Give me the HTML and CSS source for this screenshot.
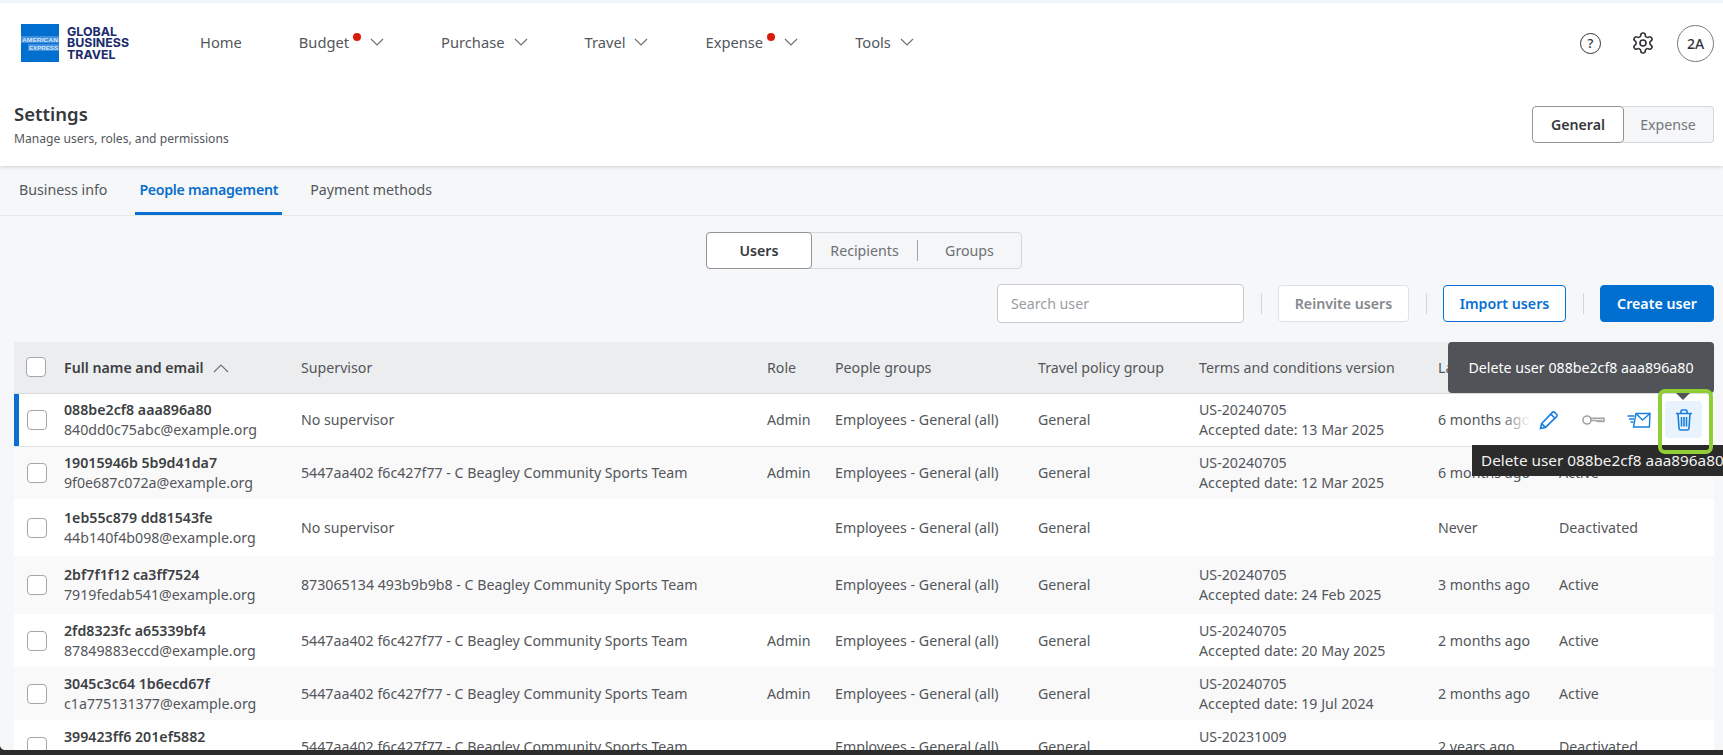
FILE: index.html
```html
<!DOCTYPE html>
<html lang="en">
<head>
<meta charset="utf-8">
<title>Settings</title>
<link rel="stylesheet" href="styles.css">
</head>
<body>
<header class="topbar">
  <div class="navrow">
    <svg class="logo" width="38" height="38" viewBox="0 0 38 38">
      <rect width="38" height="38" fill="#016fd0"/>
      <rect x="0" y="12" width="38" height="7" fill="#3f8fdc"/>
      <rect x="7" y="20" width="31" height="7" fill="#3f8fdc"/>
      <text x="1" y="18" class="logo-mark" textLength="36" lengthAdjust="spacingAndGlyphs">AMERICAN</text>
      <text x="8" y="26" class="logo-mark" textLength="29" lengthAdjust="spacingAndGlyphs">EXPRESS</text>
    </svg>
    <div class="logo-words">GLOBAL<br>BUSINESS<br>TRAVEL</div>
    <nav class="nav">
      <a class="nav-item">Home</a>
      <a class="nav-item">Budget<i class="dot"></i><svg class="chev" viewBox="0 0 14 8"><path d="M1 1l6 6 6-6"/></svg></a>
      <a class="nav-item">Purchase<svg class="chev" viewBox="0 0 14 8"><path d="M1 1l6 6 6-6"/></svg></a>
      <a class="nav-item">Travel<svg class="chev" viewBox="0 0 14 8"><path d="M1 1l6 6 6-6"/></svg></a>
      <a class="nav-item">Expense<i class="dot"></i><svg class="chev" viewBox="0 0 14 8"><path d="M1 1l6 6 6-6"/></svg></a>
      <a class="nav-item">Tools<svg class="chev" viewBox="0 0 14 8"><path d="M1 1l6 6 6-6"/></svg></a>
    </nav>
    <div class="top-tools">
      <span class="help">?</span>
      <svg class="gear" width="24" height="24" viewBox="0 0 24 24"><path d="M12.22 2h-.44a2 2 0 0 0-2 2v.18a2 2 0 0 1-1 1.73l-.43.25a2 2 0 0 1-2 0l-.15-.08a2 2 0 0 0-2.73.73l-.22.38a2 2 0 0 0 .73 2.73l.15.1a2 2 0 0 1 1 1.72v.51a2 2 0 0 1-1 1.74l-.15.09a2 2 0 0 0-.73 2.73l.22.38a2 2 0 0 0 2.73.73l.15-.08a2 2 0 0 1 2 0l.43.25a2 2 0 0 1 1 1.73V20a2 2 0 0 0 2 2h.44a2 2 0 0 0 2-2v-.18a2 2 0 0 1 1-1.73l.43-.25a2 2 0 0 1 2 0l.15.08a2 2 0 0 0 2.73-.73l.22-.39a2 2 0 0 0-.73-2.73l-.15-.08a2 2 0 0 1-1-1.74v-.5a2 2 0 0 1 1-1.74l.15-.09a2 2 0 0 0 .73-2.73l-.22-.38a2 2 0 0 0-2.73-.73l-.15.08a2 2 0 0 1-2 0l-.43-.25a2 2 0 0 1-1-1.73V4a2 2 0 0 0-2-2z"/><circle cx="12" cy="12" r="3"/></svg>
      <span class="avatar">2A</span>
    </div>
  </div>
  <div class="page-head">
    <div>
      <h1 class="title">Settings</h1>
      <p class="subtitle">Manage users, roles, and permissions</p>
    </div>
    <div class="head-seg">
      <span class="head-seg-on">General</span>
      <span class="head-seg-off">Expense</span>
    </div>
  </div>
</header>

<div class="tabs">
  <a class="tab">Business info</a>
  <a class="tab tab-on">People management</a>
  <a class="tab">Payment methods</a>
</div>

<main class="content">
  <div class="seg-wrap">
    <div class="seg">
      <span class="seg-on">Users</span>
      <span class="seg-item seg-recipients">Recipients</span>
      <span class="seg-item seg-groups">Groups</span>
    </div>
  </div>

  <div class="toolbar">
    <input class="search" placeholder="Search user">
    <i class="vsep"></i>
    <button class="btn btn-muted">Reinvite users</button>
    <i class="vsep"></i>
    <button class="btn btn-outline">Import users</button>
    <i class="vsep"></i>
    <button class="btn btn-primary">Create user</button>
  </div>

  <table class="users">
    <colgroup>
      <col class="c-check"><col class="c-name"><col class="c-sup"><col class="c-role"><col class="c-groups"><col class="c-policy"><col class="c-terms"><col class="c-last"><col class="c-status">
    </colgroup>
    <thead>
      <tr>
        <th class="chk-cell"><span class="cb cb-head"></span></th>
        <th class="th-name">Full name and email<svg class="sort" viewBox="0 0 16 9"><path d="M1 8l7-7 7 7"/></svg></th>
        <th>Supervisor</th><th>Role</th><th>People groups</th><th>Travel policy group</th><th>Terms and conditions version</th><th>Last login</th><th>Status</th>
      </tr>
    </thead>
    <tbody>
      <tr class="row-selected">
        <td class="chk-cell"><span class="cb"></span></td>
        <td><b>088be2cf8 aaa896a80</b><br>840dd0c75abc@example.org</td>
        <td>No supervisor</td><td>Admin</td><td>Employees - General (all)</td><td>General</td>
        <td>US-20240705<br>Accepted date: 13 Mar 2025</td>
        <td>6 months ago</td>
        <td class="actions-cell">
          <div class="actions">
            <span class="act-slot"><svg class="act" width="20" height="20" viewBox="0 0 20 20"><path d="M1.5 18.5l1.1-4.9L13.4 2.4a1.6 1.6 0 0 1 2.3 0l1.9 1.9a1.6 1.6 0 0 1 0 2.3L6.4 17.4z"/><path d="M2.6 13.6l3.8 3.8M11.8 4.1l3.9 3.9"/></svg></span>
            <span class="act-slot"><svg class="act act-key" width="23" height="12" viewBox="0 0 23 12"><circle cx="5" cy="6" r="4"/><path d="M9 4.3h13v3l-1.5.4-1.2-1.2-1.2 1.2-1.2-1.2-1.2 1.2-1.2-1.2H9"/></svg></span>
            <span class="act-slot"><svg class="act act-mail" width="24" height="18" viewBox="0 0 24 18"><path d="M9 2.5h14l-.6 13.5H6.5z"/><path d="M9 2.5l6.5 6.5 7.5-6.5"/><path d="M0.5 5h7M2 8h5M3.5 11h3"/></svg></span>
            <span class="act-slot act-trash">
              <svg class="act" width="18" height="22" viewBox="0 0 18 22"><path d="M1 4.5h16M6 4.5V2.2C6 1.5 6.5 1 7.2 1h3.6c.7 0 1.2.5 1.2 1.2v2.3M3 4.5l1 14.8c.1.9.7 1.7 1.7 1.7h6.6c1 0 1.6-.8 1.7-1.7l1-14.8M6.5 8v9.5M9 8v9.5M11.5 8v9.5"/></svg>
            </span>
          </div>
        </td>
      </tr>
      <tr class="row-alt">
        <td class="chk-cell"><span class="cb"></span></td>
        <td><b>19015946b 5b9d41da7</b><br>9f0e687c072a@example.org</td>
        <td>5447aa402 f6c427f77 - C Beagley Community Sports Team</td><td>Admin</td><td>Employees - General (all)</td><td>General</td>
        <td>US-20240705<br>Accepted date: 12 Mar 2025</td>
        <td>6 months ago</td><td>Active</td>
      </tr>
      <tr class="row-tall">
        <td class="chk-cell"><span class="cb"></span></td>
        <td><b>1eb55c879 dd81543fe</b><br>44b140f4b098@example.org</td>
        <td>No supervisor</td><td></td><td>Employees - General (all)</td><td>General</td>
        <td></td>
        <td>Never</td><td>Deactivated</td>
      </tr>
      <tr class="row-taller row-alt">
        <td class="chk-cell"><span class="cb"></span></td>
        <td><b>2bf7f1f12 ca3ff7524</b><br>7919fedab541@example.org</td>
        <td>873065134 493b9b9b8 - C Beagley Community Sports Team</td><td></td><td>Employees - General (all)</td><td>General</td>
        <td>US-20240705<br>Accepted date: 24 Feb 2025</td>
        <td>3 months ago</td><td>Active</td>
      </tr>
      <tr>
        <td class="chk-cell"><span class="cb"></span></td>
        <td><b>2fd8323fc a65339bf4</b><br>87849883eccd@example.org</td>
        <td>5447aa402 f6c427f77 - C Beagley Community Sports Team</td><td>Admin</td><td>Employees - General (all)</td><td>General</td>
        <td>US-20240705<br>Accepted date: 20 May 2025</td>
        <td>2 months ago</td><td>Active</td>
      </tr>
      <tr class="row-alt">
        <td class="chk-cell"><span class="cb"></span></td>
        <td><b>3045c3c64 1b6ecd67f</b><br>c1a775131377@example.org</td>
        <td>5447aa402 f6c427f77 - C Beagley Community Sports Team</td><td>Admin</td><td>Employees - General (all)</td><td>General</td>
        <td>US-20240705<br>Accepted date: 19 Jul 2024</td>
        <td>2 months ago</td><td>Active</td>
      </tr>
      <tr>
        <td class="chk-cell"><span class="cb"></span></td>
        <td><b>399423ff6 201ef5882</b><br>&nbsp;</td>
        <td>5447aa402 f6c427f77 - C Beagley Community Sports Team</td><td></td><td>Employees - General (all)</td><td>General</td>
        <td>US-20231009<br>&nbsp;</td>
        <td>2 years ago</td><td>Deactivated</td>
      </tr>
    </tbody>
  </table>
</main>

<div class="tip-styled">Delete user 088be2cf8 aaa896a80</div>
<div class="tip-native">Delete user 088be2cf8 aaa896a80</div>
<div class="highlight"></div>
<div class="screen-edge"></div>
</body>
</html>
```

FILE: styles.css
```css
* { box-sizing: border-box; }
html, body { margin: 0; height: 755px; overflow: hidden; }
body {
  position: relative;
  background: #f6f7f9;
  color: #53565a;
  font-family: "Noto Sans", sans-serif;
  font-size: 14.2px;
  border-top: 3px solid #eef6fd;
}

.topbar { background: #fff; height: 163px; box-shadow: 0 1px 4px rgba(0,0,0,.16); position: relative; }
.navrow { display: flex; align-items: center; height: 80px; padding: 0 9px 0 21px; }
.logo { flex: none; }
.logo-mark { font: 700 6px "Liberation Sans", sans-serif; fill: #d5e8f9; }
.logo-words {
  margin-left: 8px; width: 133px;
  font: 700 12.4px/11.5px Inter, sans-serif; color: #1a2b6d;
}
.nav { display: flex; align-items: center; gap: 57px; padding-bottom: 3px; font-size: 14.7px; }
.nav-item { display: flex; align-items: center; color: #53565a; line-height: 20px; }
.dot { width: 8px; height: 8px; margin: -10px 0 0 4px; border-radius: 50%; background: #d81c0c; }
.chev { width: 14px; height: 8px; margin-left: 9px; fill: none; stroke: #6a6d72; stroke-width: 1.1; }

.top-tools { margin-left: auto; display: flex; align-items: center; }
.help {
  width: 21px; height: 21px; border: 1.5px solid #2f3236; border-radius: 50%;
  display: flex; align-items: center; justify-content: center;
  color: #2f3236; font-size: 13px; line-height: 1; font-weight: 500;
}
.gear { margin: 0 22px 0 30px; fill: none; stroke: #2f3236; stroke-width: 1.6; }
.avatar {
  width: 37px; height: 37px; border: 1px solid #777a7e; border-radius: 50%;
  display: flex; align-items: center; justify-content: center;
  color: #2f3236; font-weight: 500; font-size: 14px;
}

.page-head { display: flex; justify-content: space-between; padding: 0 9px 0 14px; }
.title { margin: 18px 0 0; font-size: 18.5px; line-height: 26px; font-weight: 600; color: #35383c; }
.subtitle { margin: 3px 0 0; font-size: 12.1px; line-height: 18px; color: #53565a; }
.head-seg { display: flex; height: 37px; margin-top: 23px; line-height: 35px; }
.head-seg-on {
  width: 92px; text-align: center; background: #fff; color: #35383c; font-weight: 600;
  border: 1px solid #909396; border-radius: 4px; z-index: 1;
}
.head-seg-off {
  width: 91px; margin-left: -1px; text-align: center; background: #f5f6f8; color: #74777b;
  border: 1px solid #d5d7da; border-left: 0; border-radius: 0 4px 4px 0;
}

.tabs { display: flex; gap: 24px; height: 50px; padding-left: 15px; border-bottom: 1px solid #e6e8eb; }
.tab { padding: 0 4px; line-height: 47px; height: 49px; color: #53565a; }
.tab-on { color: #0a6fcc; font-weight: 600; border-bottom: 3px solid #0a6fd0; letter-spacing: -0.3px; }

.content { padding: 0 9px 0 14px; }
.seg-wrap { display: flex; justify-content: center; padding-top: 16px; }
.seg {
  display: flex; width: 316px; height: 37px; line-height: 35px; text-align: center;
  background: #f5f6f8; border: 1px solid #d5d7da; border-radius: 4px; color: #6d7074;
}
.seg-on {
  width: 106px; margin: -1px 0 0 -1px; height: 37px; background: #fff; color: #35383c; font-weight: 600;
  border: 1px solid #909396; border-radius: 4px;
}
.seg-item { display: block; }
.seg-recipients { width: 106px; height: 21px; margin-top: 7px; line-height: 21px; border-right: 1px solid #9fa2a6; }
.seg-groups { width: 103px; }

.toolbar { display: flex; justify-content: flex-end; align-items: center; height: 39px; margin-top: 15px; }
.search {
  width: 247px; height: 39px; padding: 0 13px; border: 1px solid #c9cbce; border-radius: 4px;
  background: #fff; font: 14.2px "Noto Sans", sans-serif; outline: 0;
}
.search::placeholder { color: #9a9da1; opacity: 1; }
.vsep { width: 1px; height: 21px; margin: 0 16.5px; background: #d3d5d8; }
.btn { height: 37px; border-radius: 4px; font: 600 14.2px "Noto Sans", sans-serif; padding: 0; }
.btn-muted { width: 131px; background: #fff; border: 1px solid #e0e2e5; color: #85888c; }
.btn-outline { width: 123px; background: #fff; border: 1px solid #0a6fd0; color: #0a6fd0; }
.btn-primary { width: 114px; background: #006fcf; border: 1px solid #006fcf; color: #fff; }

.users { width: 1700px; margin-top: 19px; table-layout: fixed; border-collapse: collapse; }
.c-check { width: 50px; } .c-name { width: 237px; } .c-sup { width: 466px; } .c-role { width: 68px; }
.c-groups { width: 203px; } .c-policy { width: 161px; } .c-terms { width: 239px; } .c-last { width: 121px; } .c-status { width: 155px; }
.users th {
  height: 51px; padding: 0; text-align: left; font-weight: 400; color: #53565a;
  background: #ecedef; border-bottom: 1px solid #d8dadc;
}
.users .th-name { font-weight: 600; color: #3c3f43; white-space: nowrap; }
.sort { width: 16px; height: 9px; margin-left: 9px; fill: none; stroke: #6a6d72; stroke-width: 1.1; }
.users td { height: 53px; padding: 0; line-height: 20px; background: #fff; vertical-align: middle; white-space: nowrap; }
.users b { font-weight: 600; color: #3c3f43; }
.users .row-alt td { background: #f9f9fa; }
.users .row-tall td { height: 57px; }
.users .row-taller td { height: 58px; }
.users .row-selected td { border-bottom: 1px solid #dfe1e3; }
.users .row-selected .chk-cell { box-shadow: inset 5px 0 0 #0a6fd0; }
.users .chk-cell { padding-left: 13px; }
.cb {
  display: block; width: 20px; height: 20px; background: #fff;
  border: 1px solid #a4a7aa; border-radius: 4px;
}
.users .chk-cell .cb-head { margin-left: -1px; }

.actions-cell { position: relative; }
.actions {
  position: absolute; top: 0; bottom: 0; right: 0; width: 214px; padding: 0 12px 0 30px;
  display: flex; align-items: center; gap: 8px;
  background: linear-gradient(90deg, rgba(255,255,255,0), #fff 30px);
}
.act-slot {
  flex: none; width: 37px; height: 37px; border-radius: 4px;
  display: flex; align-items: center; justify-content: center;
}
.act { fill: none; stroke: #1a7fdc; stroke-width: 1.6; flex: none; }
.act-key { stroke: #a0a2a5; }
.act-mail { stroke-width: 1.4; }
.act-trash { background: #e8f3fd; }

.tip-styled {
  position: absolute; left: 1448px; top: 339px; width: 266px; height: 51px;
  display: flex; align-items: center; justify-content: center;
  background: #505358; color: #fff; border-radius: 4px; font-size: 14.2px;
}
.tip-styled::after {
  content: ""; position: absolute; left: 228px; top: 100%;
  border: 7px solid transparent; border-top-color: #505358; border-bottom: 0;
}
.tip-native {
  position: absolute; left: 1472px; top: 442px; width: 251px; height: 31px; padding-left: 9px;
  background: #2b2b2b; color: #f2f2f2; font-size: 15.3px; line-height: 31px; white-space: nowrap; overflow: hidden;
}
.highlight {
  position: absolute; left: 1658px; top: 386px; width: 55px; height: 65px;
  border: 4px solid #8fce35; border-radius: 7px;
}
.screen-edge {
  position: absolute; left: 0; right: 0; top: 747px; height: 5px; background: #2c2c2c;
}
.screen-edge::before {
  content: ""; position: absolute; left: 0; top: -5px; width: 5px; height: 5px;
  background: radial-gradient(circle at 100% 0, transparent 4.5px, #2c2c2c 5.5px);
}
```
